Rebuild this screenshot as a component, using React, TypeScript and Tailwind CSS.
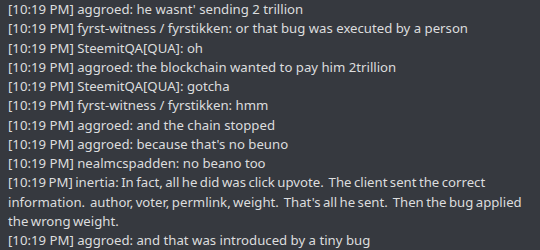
const lines = [
  "[10:19 PM] aggroed: he wasnt' sending 2 trillion",
  "[10:19 PM] fyrst-witness / fyrstikken: or that bug was executed by a person",
  "[10:19 PM] SteemitQA[QUA]: oh",
  "[10:19 PM] aggroed: the blockchain wanted to pay him 2trillion",
  "[10:19 PM] SteemitQA[QUA]: gotcha",
  "[10:19 PM] fyrst-witness / fyrstikken: hmm",
  "[10:19 PM] aggroed: and the chain stopped",
  "[10:19 PM] aggroed: because that's no beuno",
  "[10:19 PM] nealmcspadden: no beano too",
  "[10:19 PM] inertia: In fact, all he did was click upvote.  The client sent the correct\ninformation.  author, voter, permlink, weight.  That's all he sent.  Then the bug applied\nthe wrong weight.",
  "[10:19 PM] aggroed: and that was introduced by a tiny bug",
];

export default function App() {
  return (
    <div className="w-[540px] h-[250px] overflow-hidden bg-[#36393f] text-[#dcddde] font-['Noto_Sans',sans-serif] text-[13.2px] leading-[19.25px] pl-2">
      {lines.map((l, i) => (
        <div key={i} className={i === 9 ? "whitespace-pre [word-spacing:-1px]" : "whitespace-pre"}>
          {l}
        </div>
      ))}
    </div>
  );
}
